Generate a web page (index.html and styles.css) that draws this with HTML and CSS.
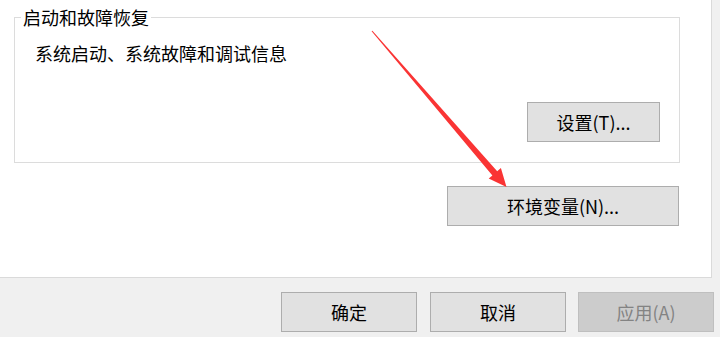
FILE: index.html
```html
<!DOCTYPE html>
<html>
<head>
<meta charset="utf-8">
<link rel="stylesheet" href="styles.css">
</head>
<body>
<div class="window">
  <div class="panel">
    <div class="group">
      <span class="legend">启动和故障恢复</span>
      <div class="desc">系统启动、系统故障和调试信息</div>
      <button class="btn btn-settings">设置(T)...</button>
    </div>
    <div class="env-row">
      <button class="btn btn-env">环境变量(N)...</button>
    </div>
  </div>
  <div class="footer">
    <button class="btn btn-foot">确定</button>
    <button class="btn btn-foot">取消</button>
    <button class="btn btn-foot btn-disabled">应用(A)</button>
  </div>
  <svg class="arrow" width="720" height="337" viewBox="0 0 720 337">
    <polygon points="372.4,30.7 497.2,171.2 500.9,168.1 506.5,187 488.7,178.5 492.4,175.4 371.6,31.3" fill="#fa3434"/>
  </svg>
</div>
</body>
</html>
```

FILE: styles.css
```css
html, body {
  margin: 0;
  padding: 0;
}
body {
  background: #f0f0f0;
  font-family: "Noto Sans CJK SC", "Microsoft YaHei", sans-serif;
  font-size: 18px;
  color: #000;
}
.window {
  position: relative;
  width: 720px;
  height: 337px;
  overflow: hidden;
}
.panel {
  box-sizing: border-box;
  width: 712px;
  height: 278px;
  background: #fff;
  border-right: 1px solid #dadada;
  border-bottom: 1px solid #dadada;
  padding-top: 17px;
  padding-left: 14px;
}
.group {
  position: relative;
  box-sizing: border-box;
  width: 666px;
  height: 146px;
  border: 1px solid #dcdcdc;
  display: flex;
  flex-direction: column;
}
.legend {
  position: absolute;
  top: -13px;
  left: 6px;
  padding: 0 2px;
  background: #fff;
  line-height: 24px;
}
.desc {
  padding-top: 23px;
  padding-left: 20px;
  line-height: 24px;
}
.btn {
  box-sizing: border-box;
  height: 40px;
  border: 1px solid #adadad;
  background: #e1e1e1;
  font-family: inherit;
  font-size: 18px;
  color: #000;
  padding: 0;
  margin: 0;
  line-height: 24px;
}
.btn-settings {
  width: 133px;
  align-self: flex-end;
  margin-top: auto;
  margin-right: 19px;
  margin-bottom: 20px;
}
.env-row {
  width: 665px;
  display: flex;
  justify-content: flex-end;
  margin-top: 23px;
}
.btn-env {
  width: 232px;
}
.footer {
  display: flex;
  justify-content: flex-end;
  padding-top: 14px;
  padding-right: 6px;
}
.btn-foot {
  width: 136px;
  margin-left: 13px;
}
.btn-foot:last-child {
  margin-left: 12px;
}
.btn-disabled {
  background: #cccccc;
  border-color: #bfbfbf;
  color: #838383;
}
.arrow {
  position: absolute;
  left: 0;
  top: 0;
  pointer-events: none;
}
```
